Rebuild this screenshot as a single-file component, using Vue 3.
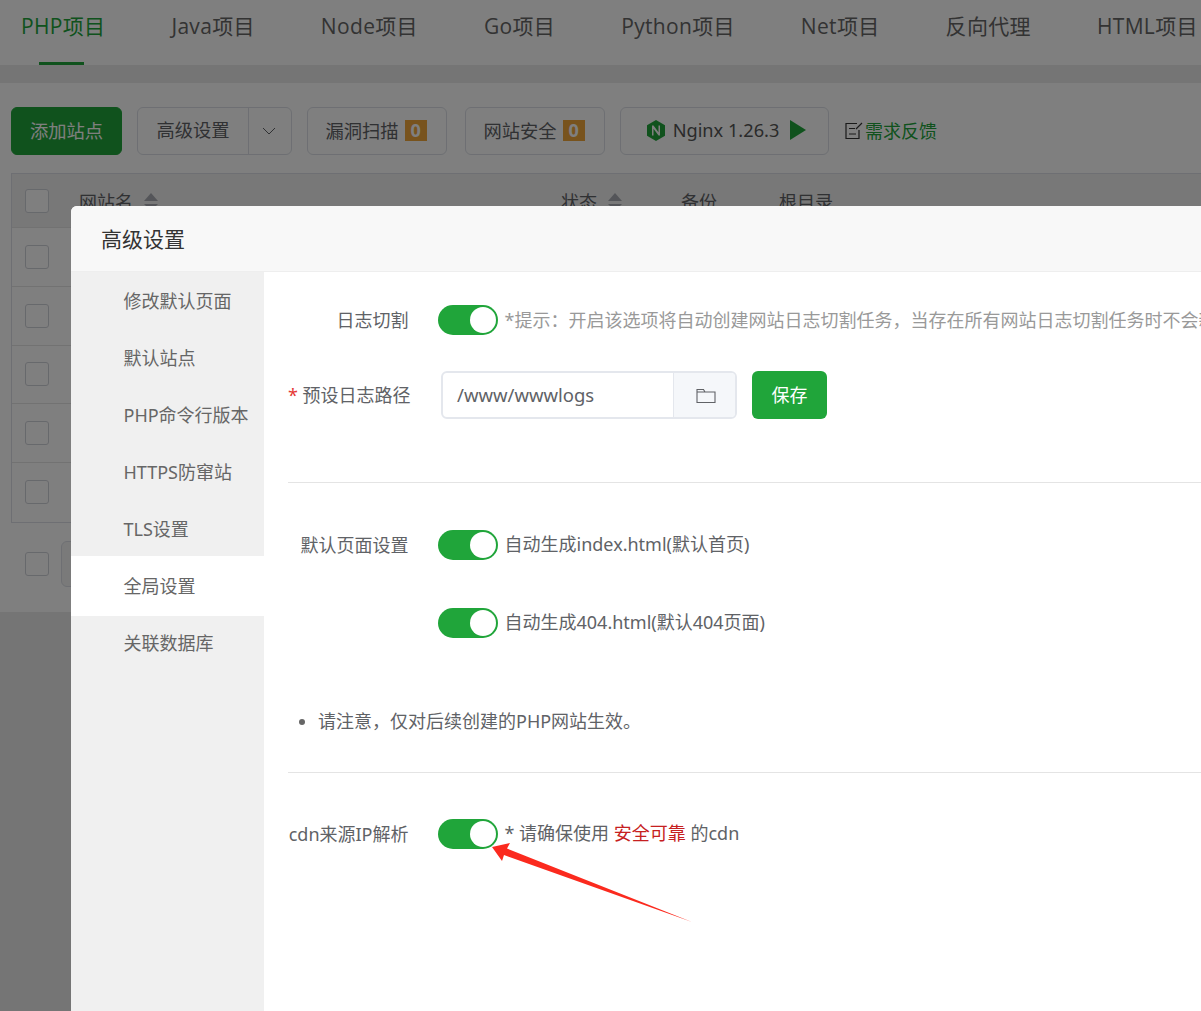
<script setup>
const tabs = ['PHP项目', 'Java项目', 'Node项目', 'Go项目', 'Python项目', 'Net项目', '反向代理', 'HTML项目']
const menu = ['修改默认页面', '默认站点', 'PHP命令行版本', 'HTTPS防窜站', 'TLS设置', '全局设置', '关联数据库']
const rows = [1, 2, 3, 4, 5]
</script>

<template>
  <div class="screen">
    <div class="page">
      <nav class="tabs">
        <span v-for="(t, i) in tabs" :key="t" class="tab" :class="{ on: i === 0 }">{{ t }}</span>
      </nav>
      <section class="panel">
        <div class="toolbar">
          <button class="btn primary">添加站点</button>
          <div class="btn split">
            <span class="split-main">高级设置</span>
            <span class="split-arrow">
              <svg width="14" height="8" viewBox="0 0 14 8"><path d="M1 1l6 6 6-6" fill="none" stroke="#606266" stroke-width="1" /></svg>
            </span>
          </div>
          <button class="btn scan">漏洞扫描<b class="count">0</b></button>
          <button class="btn safe">网站安全<b class="count">0</b></button>
          <button class="btn nginx">
            <svg width="18" height="21" viewBox="0 0 18 21">
              <path d="M9 0l9 5.200v10.600L9 21 0 15.800V5.200z" fill="#20a53a" />
              <path d="M5 15.500V5.500h1.500l5 6.700V5.500H13v10h-1.500l-5-6.700v6.700z" fill="#fff" />
            </svg>
            <span>Nginx 1.26.3</span>
            <svg width="16" height="20" viewBox="0 0 16 20"><path d="M0 0l16 10L0 20z" fill="#20a53a" /></svg>
          </button>
          <a class="feedback">
            <svg width="18" height="18" viewBox="0 0 18 18">
              <path d="M12 1.500H1v15h13V8M4 6.500h6M4 12h7M11 7l6-6" fill="none" stroke="#333" stroke-width="1.200" />
            </svg>
            <span>需求反馈</span>
          </a>
        </div>
        <div class="table">
          <div class="thead">
            <i class="check"></i>
            <span class="th name">网站名<i class="sort"></i></span>
            <span class="th status">状态<i class="sort"></i></span>
            <span class="th backup">备份</span>
            <span class="th root">根目录</span>
          </div>
          <div v-for="r in rows" :key="r" class="row"><i class="check"></i></div>
        </div>
        <div class="foot">
          <i class="check"></i>
          <span class="foot-select"></span>
        </div>
      </section>
    </div>

    <div class="mask"></div>

    <div class="dialog">
      <header class="dialog-head">高级设置</header>
      <div class="dialog-body">
        <aside class="side">
          <div v-for="(m, i) in menu" :key="m" class="side-item" :class="{ on: i === 5 }">{{ m }}</div>
        </aside>
        <main class="content">
          <div class="line first">
            <label class="label">日志切割</label>
            <span class="switch"><i></i></span>
            <span class="hint">*提示：开启该选项将自动创建网站日志切割任务，当存在所有网站日志切割任务时不会新建</span>
          </div>
          <div class="line path">
            <label class="label"><em>*</em> 预设日志路径</label>
            <div class="input">
              <span class="input-value">/www/wwwlogs</span>
              <span class="input-addon">
                <svg width="20" height="16" viewBox="0 0 20 16">
                  <path d="M1 14.500V1.500h6.500l1.500 2.500h10v10.500zM1 4h8" fill="none" stroke="#606266" stroke-width="1.100" />
                </svg>
              </span>
            </div>
            <button class="save">保存</button>
          </div>
          <hr class="rule one" />
          <div class="line page-a">
            <label class="label">默认页面设置</label>
            <span class="switch"><i></i></span>
            <span class="text">自动生成index.html(默认首页)</span>
          </div>
          <div class="line page-b">
            <label class="label"></label>
            <span class="switch"><i></i></span>
            <span class="text">自动生成404.html(默认404页面)</span>
          </div>
          <ul class="notes"><li>请注意，仅对后续创建的PHP网站生效。</li></ul>
          <hr class="rule two" />
          <div class="line cdn">
            <label class="label">cdn来源IP解析</label>
            <span class="switch"><i></i></span>
            <span class="text">* 请确保使用 <span class="red">安全可靠</span> 的cdn</span>
          </div>
        </main>
      </div>
    </div>

    <svg class="arrow" width="1201" height="1011" viewBox="0 0 1201 1011">
      <path d="M492 847L510 843L507 848.500L692 922L504 855L502 861Z" fill="#fb2a1e" />
    </svg>
  </div>
</template>

<style>
html, body { margin: 0; background: #808080; }
</style>

<style scoped>
.screen {
  position: relative;
  width: 1201px;
  height: 1011px;
  overflow: hidden;
  background: #eaeaea;
  font-family: "Noto Sans", "Noto Sans CJK SC", sans-serif;
  color: #606266;
}
.page { width: 1201px; }
.tabs {
  display: flex;
  height: 65px;
  box-sizing: border-box;
  gap: 66px;
  padding-left: 21px;
  background: #fff;
  white-space: nowrap;
  font-family: "Open Sans", "Noto Sans CJK SC", sans-serif;
}
.tab {
  position: relative;
  flex: none;
  font-size: 21px;
  line-height: 53px;
  letter-spacing: 0.330px;
  color: #666;
}
.tab.on { color: #20a53a; }
.tab.on::after {
  content: "";
  position: absolute;
  left: 18px;
  width: 45px;
  top: 62px;
  height: 3px;
  background: #20a53a;
}
.panel {
  margin-top: 18px;
  height: 529px;
  box-sizing: border-box;
  padding: 24px 0 0 11px;
  background: #fff;
}
.toolbar { display: flex; align-items: center; white-space: nowrap; }
.btn {
  box-sizing: border-box;
  height: 48px;
  display: flex;
  align-items: center;
  justify-content: center;
  padding: 0 0 2px;
  border: 1px solid #dcdfe6;
  border-radius: 6px;
  background: #fff;
  color: #606266;
  font: inherit;
  font-size: 18.300px;
}
.primary { width: 111px; background: #20a53a; border-color: #20a53a; color: #fff; }
.split { width: 155px; margin-left: 15px; padding: 0; }
.split-main { width: 110px; text-align: center; line-height: 44px; padding-bottom: 2px; border-right: 1px solid #dcdfe6; }
.split-arrow { flex: 1; display: flex; justify-content: center; padding-right: 3px; }
.scan { width: 140px; margin-left: 15px; padding-right: 2px; }
.safe { width: 140px; margin-left: 18px; padding-right: 2px; }
.count {
  margin-left: 6px;
  width: 22px;
  height: 21px;
  line-height: 21px;
  background: #f0a63b;
  color: #fff;
  font-weight: 700;
  font-size: 18px;
}
.nginx { width: 209px; margin-left: 15px; gap: 8px; font-size: 18.200px; color: #555; padding-left: 4px; }
.nginx svg:last-child { margin-left: 3px; }
.feedback {
  display: flex;
  align-items: center;
  gap: 2px;
  margin-left: 16px;
  padding-bottom: 3px;
  font-size: 18px;
  color: #20a53a;
}
.feedback svg { margin-top: 2px; }
.table {
  margin-top: 18px;
  width: 1300px;
  box-sizing: border-box;
  border: 1px solid #dcdfe6;
}
.thead {
  position: relative;
  height: 53px;
  background: #f0f0f0;
  border-bottom: 1px solid #e4e4e4;
  display: flex;
  align-items: center;
}
.row {
  height: 58.750px;
  box-sizing: border-box;
  border-bottom: 1px solid #e4e4e4;
  display: flex;
  align-items: center;
}
.row:last-child { border-bottom: 0; }
.check {
  flex: none;
  display: block;
  box-sizing: border-box;
  width: 24px;
  height: 24px;
  margin-left: 13px;
  border: 1px solid #cfd2d8;
  border-radius: 3px;
  background: #fff;
}
.th { position: absolute; font-size: 18px; line-height: 24px; top: 16px; display: flex; align-items: center; color: #606266; white-space: nowrap; }
.name { left: 67px; }
.status { left: 549px; }
.backup { left: 669px; }
.root { left: 767px; }
.sort {
  position: relative;
  display: block;
  width: 15px;
  height: 18px;
  margin-left: 11px;
}
.sort::before, .sort::after {
  content: "";
  position: absolute;
  left: 0;
  border-left: 7.500px solid transparent;
  border-right: 7.500px solid transparent;
}
.sort::before { top: 0; border-bottom: 8px solid #a8abb2; }
.sort::after { bottom: 0; border-top: 7px solid #a8abb2; }
.foot { display: flex; align-items: center; margin-top: 18px; height: 46px; }
.foot .check { margin-left: 14px; }
.foot-select {
  width: 60px;
  height: 44px;
  margin-left: 12px;
  border: 1px solid #dcdfe6;
  border-radius: 6px;
  background: #f5f5f5;
}
.mask {
  position: absolute;
  inset: 0;
  background: rgba(0, 0, 0, 0.5);
}
.dialog {
  position: absolute;
  left: 71px;
  top: 206px;
  width: 1200px;
  height: 900px;
  border-radius: 6px 0 0 0;
  background: #fff;
  overflow: hidden;
}
.dialog-head {
  box-sizing: border-box;
  height: 66px;
  padding-left: 30px;
  line-height: 66px;
  font-size: 21px;
  color: #333;
  background: #f8f8f8;
  border-bottom: 1px solid #eee;
}
.dialog-body { display: flex; height: 834px; }
.side { flex: none; width: 193px; background: #f0f0f0; padding-top: 1px; }
.side-item {
  height: 57px;
  line-height: 57px;
  padding-left: 52.500px;
  font-size: 18px;
  color: #666;
  white-space: nowrap;
}
.side-item.on {
  height: 60px;
  line-height: 60px;
  margin: -2px 0 -1px;
  background: #fff;
}
.content { flex: 1; min-width: 0; padding: 33px 0 0 24px; }
.line { display: flex; align-items: center; white-space: nowrap; }
.label {
  flex: none;
  width: 120.500px;
  margin-right: 29.500px;
  text-align: right;
  font-size: 18px;
  line-height: 30px;
  color: #606266;
}
.label em { color: #e53935; font-style: normal; }
.switch {
  position: relative;
  flex: none;
  width: 60px;
  height: 30px;
  border-radius: 15px;
  background: #20a53a;
}
.switch i {
  position: absolute;
  right: 2px;
  top: 2px;
  width: 26px;
  height: 26px;
  border-radius: 50%;
  background: #fff;
}
.hint { margin-left: 6.500px; padding-bottom: 2px; font-size: 18px; color: #999; }
.text { margin-left: 6.500px; padding-bottom: 4px; font-size: 18px; color: #606266; }
.red { color: #c62020; }
.path { margin-top: 36px; }
.input {
  box-sizing: border-box;
  display: flex;
  flex: none;
  width: 296px;
  height: 48px;
  margin-left: 3px;
  border: 2px solid #e4e7ed;
  border-radius: 6px;
  overflow: hidden;
}
.input-value {
  flex: 1;
  padding-left: 14px;
  font-size: 18.500px;
  line-height: 44px;
  color: #606266;
}
.input-addon {
  flex: none;
  width: 59px;
  padding: 2px 0 0 2px;
  display: flex;
  align-items: center;
  justify-content: center;
  background: #f5f7fa;
  border-left: 1px solid #e4e7ed;
}
.save {
  flex: none;
  width: 75px;
  height: 48px;
  margin-left: 15px;
  padding: 0 0 2px;
  border: 0;
  border-radius: 6px;
  background: #20a53a;
  color: #fff;
  font: inherit;
  font-size: 18px;
}
.rule { margin: 0; height: 1px; border: 0; background: #e4e4e4; }
.rule.one { margin-top: 63px; }
.page-a { margin-top: 47px; }
.page-b { margin-top: 48px; }
.notes {
  margin: 70px 0 0;
  padding: 0 0 0 30px;
  height: 26px;
  font-size: 18px;
  line-height: 26px;
  color: #606266;
  white-space: nowrap;
}
.notes li::marker { color: #666; }
.rule.two { margin-top: 38px; }
.cdn { margin-top: 46px; }
.arrow { position: absolute; left: 0; top: 0; pointer-events: none; }
</style>
